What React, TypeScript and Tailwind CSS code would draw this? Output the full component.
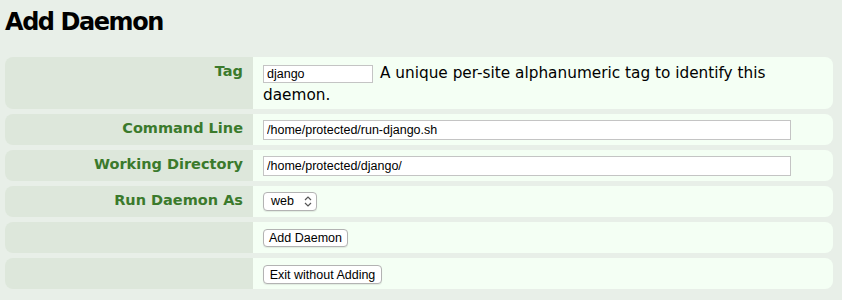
const labelFont = { fontFamily: '"DejaVu Sans", Verdana, sans-serif' };

function Row({ label, children, className = "" }: { label?: string; children: React.ReactNode; className?: string }) {
  return (
    <div className="flex">
      <div
        className="w-[248px] shrink-0 rounded-l-[8px] bg-[#dde7db] pr-[10px] pt-[3px] text-right text-[14.5px] font-bold leading-[22px] text-[#3b7a2c]"
        style={labelFont}
      >
        {label}
      </div>
      <div className={"flex-1 rounded-r-[8px] bg-[#f4fff4] pl-[10px] pr-[10px] " + className}>{children}</div>
    </div>
  );
}

const inputCls =
  "border border-[#c4c4c4] bg-white px-[3px] text-[12.5px] text-black outline-none font-['Liberation_Sans',Arial,sans-serif]";

const btnCls =
  "whitespace-nowrap rounded-[4px] border border-[#b3b3b3] bg-white px-0 text-center text-[12.5px] leading-[16px] text-black shadow-[0_1px_1px_rgba(0,0,0,0.08)] font-['Liberation_Sans',Arial,sans-serif]";

export default function App() {
  return (
    <div className="min-h-[300px] w-full bg-[#e8efe8] pl-[5px] pr-[9px] pt-[6px]">
      <h1
        className="text-[24px] font-bold leading-[32px] tracking-[-0.06em] text-black"
        style={labelFont}
      >
        Add Daemon
      </h1>
      <div className="mt-[19px] flex flex-col gap-[5px]">
        <Row label="Tag" className="pt-[5px] pb-[3px]">
          <p className="text-[15.3px] leading-[22px] text-black" style={labelFont}>
            <input defaultValue="django" className={inputCls + " mr-[7px] h-[18px] w-[110px]"} />
            A unique per-site alphanumeric tag to identify this daemon.
          </p>
        </Row>
        <Row label="Command Line" className="pt-[6px] pb-[5px]">
          <input defaultValue="/home/protected/run-django.sh" className={inputCls + " block h-[20px] w-[528px]"} />
        </Row>
        <Row label="Working Directory" className="pt-[6px] pb-[5px]">
          <input defaultValue="/home/protected/django/" className={inputCls + " block h-[20px] w-[528px]"} />
        </Row>
        <Row label="Run Daemon As" className="pt-[6px] pb-[6px]">
          <div className="flex h-[19px] w-[54px] items-center justify-between rounded-[4px] border border-[#b3b3b3] bg-white pl-[7px] pr-[4px] shadow-[0_1px_1px_rgba(0,0,0,0.08)]">
            <span className="text-[12.5px] text-black font-['Liberation_Sans',Arial,sans-serif]">web</span>
            <svg width="8" height="11" viewBox="0 0 8 11" fill="none" stroke="#555" strokeWidth="1.2">
              <path d="M1 4 L4 1 L7 4" />
              <path d="M1 7 L4 10 L7 7" />
            </svg>
          </div>
        </Row>
        <Row className="pt-[7px] pb-[6px]">
          <button className={btnCls + " block h-[18px] w-[85px]"}>Add Daemon</button>
        </Row>
        <Row className="pt-[7px] pb-[5px]">
          <button className={btnCls + " block h-[19px] w-[119px]"}>Exit without Adding</button>
        </Row>
      </div>
    </div>
  );
}
